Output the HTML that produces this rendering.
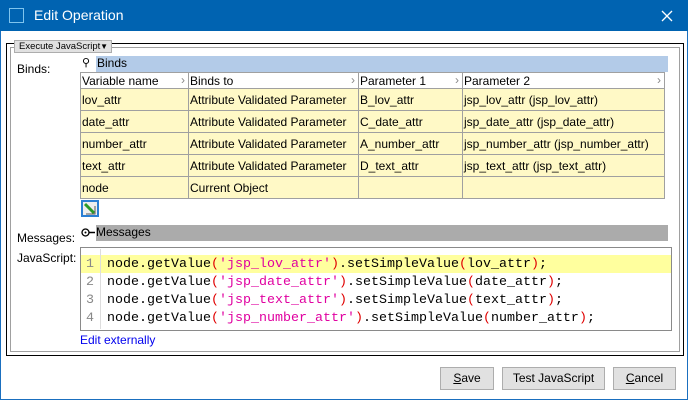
<!DOCTYPE html>
<html><head><style>
*{margin:0;padding:0;box-sizing:border-box}
body{width:688px;height:400px;background:#fff;font-family:"Liberation Sans",sans-serif;font-size:12px;color:#000;position:relative;overflow:hidden}
.a{position:absolute}
.win{left:0;top:0;width:688px;height:400px;border:1px solid #1a6fbf}
.title{left:0;top:0;width:688px;height:31px;background:#0063b1;color:#fff;font-size:14px}
table{border-collapse:collapse;position:absolute;left:80px;top:72px;table-layout:fixed}
td{border:1px solid #a0a0a0;height:22px;padding:0 1px;font-size:12px;white-space:nowrap;overflow:hidden;background:#fff9c6}
tr.h td{background:#fff;height:16px;position:relative}
tr.h td span{position:absolute;right:3px;top:0;color:#888}
.code{font-family:"Liberation Mono",monospace;font-size:13.33px;line-height:18px}
.s{color:#e000a0}.p{color:#e00000}
.btn{position:absolute;top:367px;height:23px;background:#e1e1e1;border:1px solid #adadad;font-size:12px;text-align:center;line-height:21px}
</style></head><body>
<div class="a win"></div>
<div class="a title"><div class="a" style="left:9px;top:8px;width:15px;height:15px;border:1px solid #7fc4ee"></div><div class="a" style="left:34px;top:7px">Edit Operation</div><svg class="a" style="left:661px;top:10px" width="12" height="12"><path d="M1 1L11 11M11 1L1 11" stroke="#fff" stroke-width="1.3"/></svg></div>
<div class="a" style="left:6px;top:43px;width:678px;height:313px;border:1px solid #000"></div>
<div class="a" style="left:10px;top:47px;width:670px;height:305px;border:1px solid #a0a0a0"></div>
<div class="a" style="left:14px;top:40px;width:98px;height:13px;background:#e1e1e1;border:1px solid #adadad;font-size:9.5px;line-height:11px;padding-left:4px;white-space:nowrap">Execute JavaScript<span style="font-size:8px;position:absolute;right:3px;top:0">▼</span></div>
<div class="a" style="left:17px;top:62px">Binds:</div>
<div class="a" style="left:82px;top:56px;font-size:11px">⚲</div>
<div class="a" style="left:96px;top:56px;width:572px;height:16px;background:#b3cbe8;padding-left:1px;line-height:15px">Binds</div>
<table>
<colgroup><col style="width:108px"><col style="width:170px"><col style="width:104px"><col style="width:202px"></colgroup>
<tr class="h"><td>Variable name<span>›</span></td><td>Binds to<span>›</span></td><td>Parameter 1<span>›</span></td><td>Parameter 2<span>›</span></td></tr>
<tr><td>lov_attr</td><td>Attribute Validated Parameter</td><td>B_lov_attr</td><td>jsp_lov_attr (jsp_lov_attr)</td></tr>
<tr><td>date_attr</td><td>Attribute Validated Parameter</td><td>C_date_attr</td><td>jsp_date_attr (jsp_date_attr)</td></tr>
<tr><td>number_attr</td><td>Attribute Validated Parameter</td><td>A_number_attr</td><td>jsp_number_attr (jsp_number_attr)</td></tr>
<tr><td>text_attr</td><td>Attribute Validated Parameter</td><td>D_text_attr</td><td>jsp_text_attr (jsp_text_attr)</td></tr>
<tr><td>node</td><td>Current Object</td><td></td><td></td></tr>
</table>
<div class="a" style="left:81px;top:200px;width:18px;height:17px;border:2px solid #2a7fd4;background:#eee"><svg width="14" height="13"><path d="M2 2 L11 11" stroke="#2a9a2a" stroke-width="3"/><path d="M3 12h9V4" stroke="#555" fill="none"/></svg></div>
<div class="a" style="left:17px;top:231px">Messages:</div>
<svg class="a" style="left:81px;top:228px" width="14" height="10"><circle cx="4.5" cy="4.5" r="3.5" fill="none" stroke="#000" stroke-width="1.3"/><circle cx="4.5" cy="4.5" r="1" fill="#000"/><path d="M8 4.5h6" stroke="#000" stroke-width="1.5"/></svg>
<div class="a" style="left:96px;top:225px;width:572px;height:16px;background:#ababab;line-height:15px">Messages</div>
<div class="a" style="left:17px;top:251px">JavaScript:</div>
<div class="a" style="left:80px;top:247px;width:592px;height:84px;border:1px solid #8a8a8a"></div>
<div class="a" style="left:81px;top:255px;width:590px;height:18px;background:#ffff9e"></div>
<div class="a" style="left:100px;top:249px;width:1px;height:80px;background:#ddd"></div>
<div class="a code" style="left:86px;top:256px;color:#888">1<br>2<br>3<br>4</div>
<div class="a code" style="left:107px;top:256px;white-space:pre">node.getValue<span class="p">(</span><span class="s">'jsp_lov_attr'</span><span class="p">)</span>.setSimpleValue<span class="p">(</span>lov_attr<span class="p">)</span>;
node.getValue<span class="p">(</span><span class="s">'jsp_date_attr'</span><span class="p">)</span>.setSimpleValue<span class="p">(</span>date_attr<span class="p">)</span>;
node.getValue<span class="p">(</span><span class="s">'jsp_text_attr'</span><span class="p">)</span>.setSimpleValue<span class="p">(</span>text_attr<span class="p">)</span>;
node.getValue<span class="p">(</span><span class="s">'jsp_number_attr'</span><span class="p">)</span>.setSimpleValue<span class="p">(</span>number_attr<span class="p">)</span>;</div>
<div class="a" style="left:80px;top:333px;color:#0000ee">Edit externally</div>
<div class="btn" style="left:440px;width:54px"><u>S</u>ave</div>
<div class="btn" style="left:502px;width:103px">Test JavaScript</div>
<div class="btn" style="left:613px;width:63px"><u>C</u>ancel</div>
</body></html>
